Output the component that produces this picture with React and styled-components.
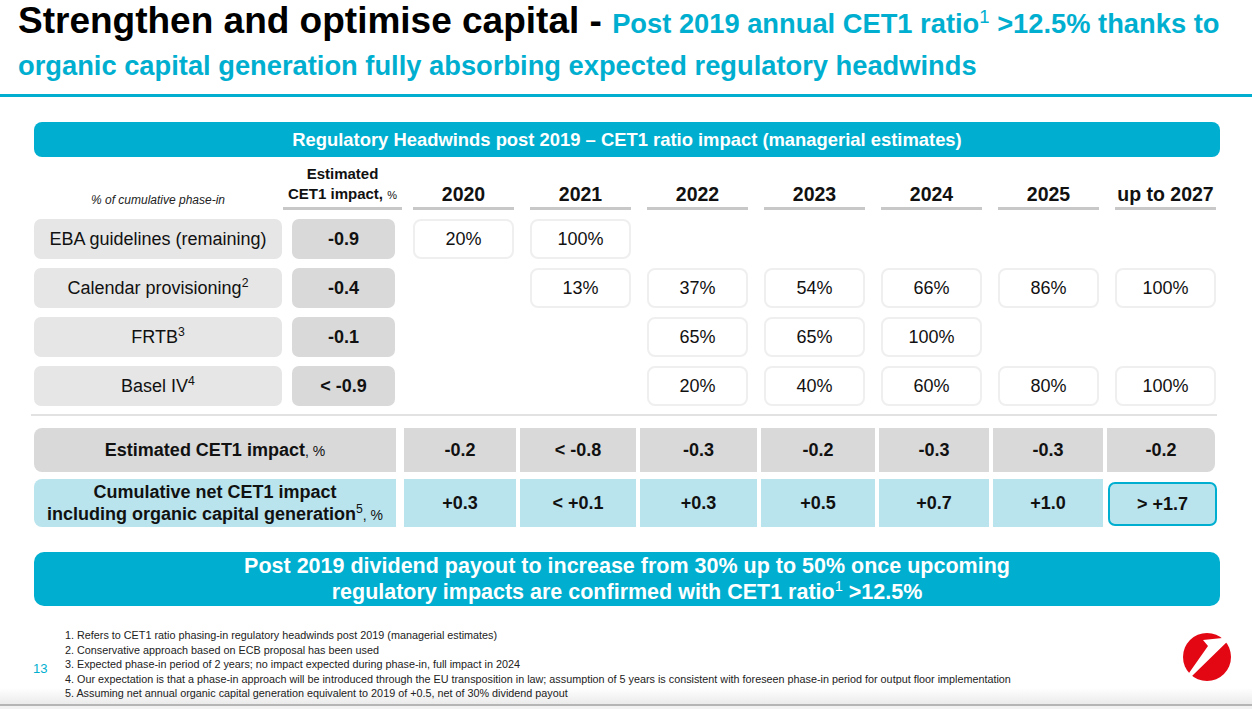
import React from "react";
import styled, { createGlobalStyle } from "styled-components";

const CYAN = "#00afd0";

const GlobalStyle = createGlobalStyle`
  html, body {
    margin: 0;
    padding: 0;
    background: #fff;
  }
  body {
    font-family: "Liberation Sans", Arial, sans-serif;
    color: #111;
  }
`;

const years = ["2020", "2021", "2022", "2023", "2024", "2025", "up to 2027"];

const phaseRows = [
  { label: "EBA guidelines (remaining)", impact: "-0.9", cells: ["20%", "100%", null, null, null, null, null] },
  { label: "Calendar provisioning", sup: "2", impact: "-0.4", cells: [null, "13%", "37%", "54%", "66%", "86%", "100%"] },
  { label: "FRTB", sup: "3", impact: "-0.1", cells: [null, null, "65%", "65%", "100%", null, null] },
  { label: "Basel IV", sup: "4", impact: "< -0.9", cells: [null, null, "20%", "40%", "60%", "80%", "100%"] },
];

const estimated = ["-0.2", "< -0.8", "-0.3", "-0.2", "-0.3", "-0.3", "-0.2"];
const cumulative = ["+0.3", "< +0.1", "+0.3", "+0.5", "+0.7", "+1.0", "> +1.7"];

const notes = [
  "1. Refers to CET1 ratio phasing-in regulatory headwinds post 2019 (managerial estimates)",
  "2. Conservative approach based on ECB proposal has been used",
  "3. Expected phase-in period of 2 years; no impact expected during phase-in, full impact in 2024",
  "4. Our expectation is that a phase-in approach will be introduced through the EU transposition in law; assumption of 5 years is consistent with foreseen phase-in period for output floor implementation",
  "5. Assuming net annual organic capital generation equivalent to 2019 of +0.5, net of 30% dividend payout",
];

export default function App() {
  return (
    <>
      <GlobalStyle />
      <Page>
        <Header>
          <TitleLine>
            Strengthen and optimise capital -{" "}
            <Highlight>
              Post 2019 annual CET1 ratio<Sup>1</Sup> &gt;12.5% thanks to
            </Highlight>
          </TitleLine>
          <TitleLine>
            <Highlight>organic capital generation fully absorbing expected regulatory headwinds</Highlight>
          </TitleLine>
        </Header>
        <Rule />

        <Main>
          <Bar>Regulatory Headwinds post 2019 – CET1 ratio impact (managerial estimates)</Bar>

          <PhaseGrid>
            <PhaseNote>% of cumulative phase-in</PhaseNote>
            <ImpactHead>
              Estimated
              <br />
              CET1 impact, <Small>%</Small>
            </ImpactHead>
            {years.map((y) => (
              <YearHead key={y}>{y}</YearHead>
            ))}

            {phaseRows.map((row) => (
              <React.Fragment key={row.label}>
                <LabelCell>
                  <span>
                    {row.label}
                    {row.sup && <Sup>{row.sup}</Sup>}
                  </span>
                </LabelCell>
                <ImpactCell>{row.impact}</ImpactCell>
                {row.cells.map((c, i) =>
                  c ? <ValueCell key={i}>{c}</ValueCell> : <span key={i} />
                )}
              </React.Fragment>
            ))}
          </PhaseGrid>

          <Divider />

          <SummaryGrid>
            <SumLabel $bg="#d9d9d9">
              <span>
                Estimated CET1 impact<Light>, %</Light>
              </span>
            </SumLabel>
            {estimated.map((v, i) => (
              <SumValue key={i} $bg="#d9d9d9" $end={i === estimated.length - 1}>
                {v}
              </SumValue>
            ))}

            <SumLabel $bg="#b9e4ee">
              <span>
                Cumulative net CET1 impact
                <br />
                including organic capital generation<Sup>5</Sup>
                <Light>, %</Light>
              </span>
            </SumLabel>
            {cumulative.map((v, i) =>
              i === cumulative.length - 1 ? (
                <Highlighted key={i}>{v}</Highlighted>
              ) : (
                <SumValue key={i} $bg="#b9e4ee">
                  {v}
                </SumValue>
              )
            )}
          </SummaryGrid>

          <Banner>
            <div>Post 2019 dividend payout to increase from 30% up to 50% once upcoming</div>
            <div>
              regulatory impacts are confirmed with CET1 ratio<Sup>1</Sup> &gt;12.5%
            </div>
          </Banner>

          <Footer>
            <PageNo>13</PageNo>
            <Notes>
              {notes.map((n) => (
                <li key={n}>{n}</li>
              ))}
            </Notes>
            <Logo viewBox="0 0 52 52">
              <circle cx="25" cy="26" r="24" fill="#e30613" />
              <path d="M21 9 L50 6 L10 45 L4 47 L7 42 L26 15 Z" fill="#fff" />
            </Logo>
          </Footer>
        </Main>
      </Page>
    </>
  );
}

const Page = styled.div`
  width: 1252px;
  height: 709px;
  overflow: hidden;
  display: flex;
  flex-direction: column;
  background: linear-gradient(
    to bottom,
    #fff 0,
    #fff 688px,
    #ebebeb 704px,
    #b5b5b5 704px,
    #b5b5b5 706px,
    #f2f2f2 706px
  );
`;

const Header = styled.header`
  padding: 0 18px;
`;

const TitleLine = styled.h1`
  margin: 0;
  font-size: 37px;
  line-height: 42px;
  font-weight: 700;
  color: #000;
  white-space: nowrap;
`;

const Highlight = styled.span`
  color: ${CYAN};
  font-size: 27.3px;
  line-height: 30px;
`;

const Sup = styled.sup`
  font-size: 0.68em;
  line-height: 0;
  vertical-align: super;
  font-weight: 400;
`;

const Small = styled.span`
  font-size: 11px;
  font-weight: 400;
`;

const Light = styled.span`
  font-size: 14px;
  font-weight: 400;
`;

const Rule = styled.div`
  height: 3px;
  margin-top: 10px;
  background: ${CYAN};
`;

const Main = styled.main`
  padding: 25px 32px 0 34px;
`;

const Bar = styled.div`
  height: 35px;
  border-radius: 8px;
  background: ${CYAN};
  color: #fff;
  font-size: 18.4px;
  font-weight: 700;
  display: flex;
  align-items: center;
  justify-content: center;
`;

const PhaseGrid = styled.div`
  display: grid;
  grid-template-columns: 258px 121px repeat(7, 117px);
  grid-template-rows: 45px repeat(4, 40px);
  row-gap: 9px;
  margin-top: 8px;
`;

const PhaseNote = styled.div`
  width: 248px;
  align-self: end;
  padding-bottom: 3px;
  text-align: center;
  font-size: 12px;
  font-style: italic;
  color: #222;
`;

const ImpactHead = styled.div`
  width: 119px;
  margin-left: -9px;
  align-self: end;
  border-bottom: 3px solid #c8c8c8;
  padding-bottom: 2px;
  text-align: center;
  font-size: 15px;
  font-weight: 700;
  line-height: 20px;
  white-space: nowrap;
`;

const YearHead = styled.div`
  width: 101px;
  align-self: end;
  border-bottom: 3px solid #c8c8c8;
  padding-bottom: 2px;
  text-align: center;
  font-size: 19.5px;
  font-weight: 700;
  line-height: 22px;
  white-space: nowrap;
`;

const LabelCell = styled.div`
  width: 248px;
  border-radius: 7px;
  background: #e6e6e6;
  display: flex;
  align-items: center;
  justify-content: center;
  font-size: 18px;
`;

const ImpactCell = styled.div`
  width: 103px;
  border-radius: 7px;
  background: #d9d9d9;
  display: flex;
  align-items: center;
  justify-content: center;
  font-size: 18px;
  font-weight: 700;
`;

const ValueCell = styled.div`
  box-sizing: border-box;
  width: 101px;
  border: 2px solid #efefef;
  border-radius: 8px;
  background: #fff;
  display: flex;
  align-items: center;
  justify-content: center;
  font-size: 18px;
`;

const Divider = styled.div`
  height: 2px;
  margin: 8px 3px 0 -3px;
  background: #e2e2e2;
`;

const SummaryGrid = styled.div`
  display: grid;
  grid-template-columns: 366px 112px 116px 117px 114px 110px 110px 108px;
  grid-template-rows: 44px 48px;
  column-gap: 4px;
  row-gap: 7px;
  margin-top: 12px;
`;

const SumLabel = styled.div`
  margin-right: 4px;
  border-radius: 8px 0 0 8px;
  background: ${(p) => p.$bg};
  display: flex;
  align-items: center;
  justify-content: center;
  text-align: center;
  font-size: 18px;
  font-weight: 700;
  line-height: 22px;
`;

const SumValue = styled.div`
  background: ${(p) => p.$bg};
  border-radius: ${(p) => (p.$end ? "0 8px 8px 0" : "0")};
  display: flex;
  align-items: center;
  justify-content: center;
  font-size: 18px;
  font-weight: 700;
`;

const Highlighted = styled(SumValue)`
  background: #b9e4ee;
  border: 2px solid ${CYAN};
  border-radius: 7px;
  margin: 3px -2px 1px 1px;
`;

const Banner = styled.div`
  margin-top: 25px;
  height: 54px;
  border-radius: 10px;
  background: ${CYAN};
  color: #fff;
  font-size: 21.5px;
  font-weight: 700;
  line-height: 26px;
  display: flex;
  flex-direction: column;
  align-items: center;
  justify-content: center;
`;

const Footer = styled.footer`
  display: flex;
  align-items: center;
  margin: 22px -14px 0 -1px;
`;

const PageNo = styled.div`
  width: 32px;
  margin-top: 8px;
  color: ${CYAN};
  font-size: 13px;
`;

const Notes = styled.ol`
  flex: 1;
  margin: 0;
  padding: 0;
  list-style: none;
  font-size: 10.8px;
  line-height: 14.6px;
  color: #222;
  white-space: nowrap;
`;

const Logo = styled.svg`
  width: 52px;
  height: 52px;
  margin-top: -14px;
  flex-shrink: 0;
`;
